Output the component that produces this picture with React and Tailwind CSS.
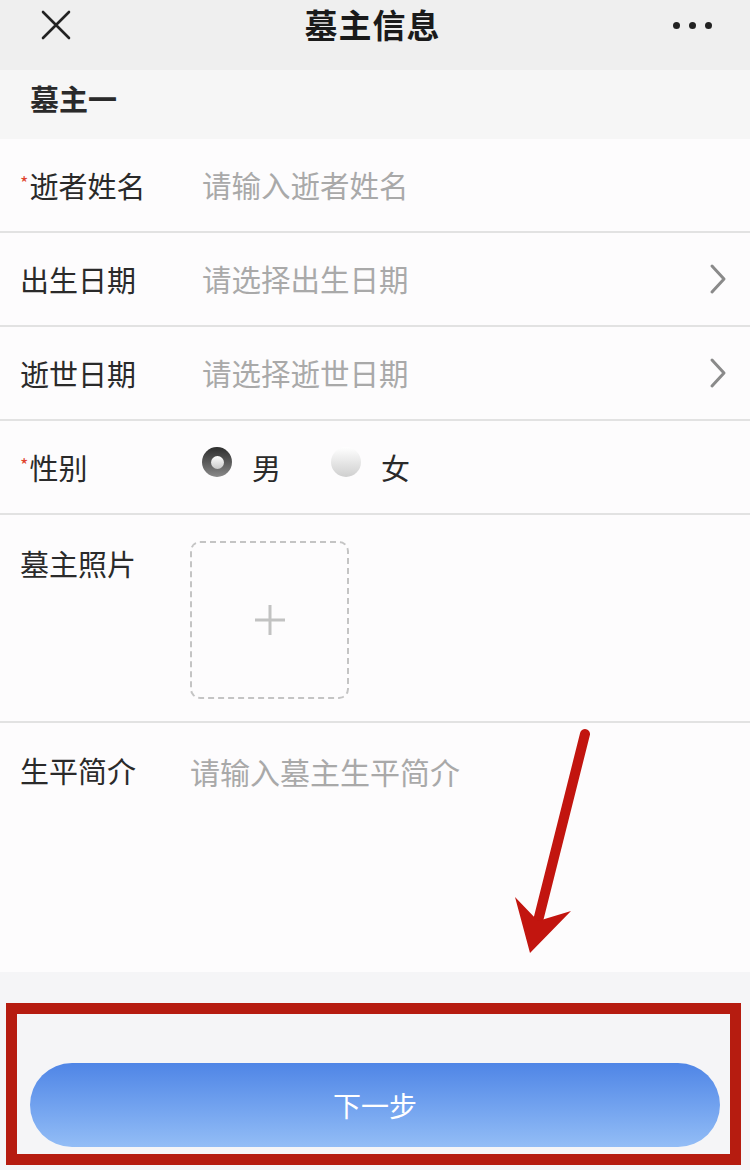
import React from 'react';

const Chevron = () => (
  <svg width="20" height="32" viewBox="0 0 20 32" className="shrink-0">
    <path d="M4 3 L16 16 L4 29" fill="none" stroke="#8a8a8a" strokeWidth="3" strokeLinecap="round" strokeLinejoin="round" />
  </svg>
);

const Label = ({ required, children }) => (
  <div className="w-[182px] shrink-0 flex items-start text-[29px] leading-none text-[#2a2a2a]">
    {required ? <span className="text-[18px] text-[#e0432d] mt-[2px] mr-[1px]">*</span> : null}
    <span>{children}</span>
  </div>
);

const Row = ({ label, required, placeholder, arrow }) => (
  <div className="h-[94px] flex items-center pl-[20px] pr-[22px] border-b-2 border-[#e2e2e2] bg-[#fdfcfd]">
    <Label required={required}>{label}</Label>
    <div className="flex-1 text-[29.5px] leading-none text-[#a9a9a9]">{placeholder}</div>
    {arrow ? <Chevron /> : null}
  </div>
);

const App = () => {
  return (
    <div className="relative w-[750px] h-[1170px] overflow-hidden bg-[#f5f5f7]" style={{ fontFamily: '"Noto Sans CJK SC", "Noto Sans", sans-serif' }}>
      {/* header */}
      <div className="h-[70px] bg-[#efefef] pb-[20px]">
        <div className="h-[50px] flex items-center justify-between px-[40px]">
          <svg width="32" height="30" viewBox="0 0 32 30">
            <path d="M3 2 L29 28 M29 2 L3 28" stroke="#222" strokeWidth="2.6" strokeLinecap="round" />
          </svg>
          <div className="text-[33px] font-semibold text-[#1a1a1a] tracking-[1px]">墓主信息</div>
          <div className="flex gap-[9px] mr-[-2px]">
            <span className="w-[7px] h-[7px] rounded-full bg-[#222]" />
            <span className="w-[7px] h-[7px] rounded-full bg-[#222]" />
            <span className="w-[7px] h-[7px] rounded-full bg-[#222]" />
          </div>
        </div>
      </div>

      {/* section title */}
      <div className="h-[69px] bg-[#f6f6f6] pl-[30px] pt-[13px] text-[29px] font-semibold text-[#2a2a2a] leading-[30px]">墓主一</div>

      <Row required label="逝者姓名" placeholder="请输入逝者姓名" />
      <Row label="出生日期" placeholder="请选择出生日期" arrow />
      <Row label="逝世日期" placeholder="请选择逝世日期" arrow />

      {/* gender */}
      <div className="h-[94px] flex items-center pl-[20px] border-b-2 border-[#e2e2e2] bg-[#fdfcfd]">
        <Label required>性别</Label>
        <div className="flex items-center text-[29px] leading-none text-[#2a2a2a]">
          <span className="w-[30px] h-[30px] rounded-full bg-gradient-to-b from-[#2e2e2e] to-[#8a8a8a] flex items-center justify-center -mt-[10px]">
            <span className="w-[13px] h-[13px] rounded-full bg-gradient-to-b from-[#ffffff] to-[#c9c9c9]" />
          </span>
          <span className="ml-[20px]">男</span>
          <span className="ml-[50px] w-[30px] h-[30px] rounded-full bg-gradient-to-b from-[#ffffff] to-[#cfcfcf] -mt-[10px]" />
          <span className="ml-[20px]">女</span>
        </div>
      </div>

      {/* photo */}
      <div className="h-[208px] flex items-start pl-[20px] pt-[26px] border-b-2 border-[#e2e2e2] bg-[#fdfcfd]">
        <div className="w-[170px] shrink-0 pt-[8px] text-[29px] leading-none text-[#2a2a2a]">墓主照片</div>
        <div className="w-[159px] h-[158px] rounded-[10px] border-2 border-dashed border-[#c4c4c4] flex items-center justify-center">
          <svg width="34" height="34" viewBox="0 0 34 34">
            <path d="M17 2 V32 M2 17 H32" stroke="#c2c2c2" strokeWidth="3" />
          </svg>
        </div>
      </div>

      {/* intro */}
      <div className="h-[249px] flex items-start pl-[20px] pt-[33px] bg-[#fdfcfd]">
        <div className="w-[170px] shrink-0 text-[29px] leading-none text-[#2a2a2a]">生平简介</div>
        <div className="text-[30px] leading-none text-[#a9a9a9]">请输入墓主生平简介</div>
      </div>

      {/* bottom */}
      <div className="relative h-[198px] pt-[91px] px-[30px]">
        <div className="h-[84px] rounded-full bg-gradient-to-b from-[#4f85e6] to-[#93bdf6] flex items-center justify-center text-[28px] text-white">
          下一步
        </div>
        <div className="absolute left-[6px] right-[9px] top-[31px] bottom-[5px] border-[11px] border-[#b61c10]" />
      </div>

      {/* annotation arrow */}
      <svg className="absolute left-[505px] top-[725px]" width="90" height="235" viewBox="0 0 90 235">
        <path d="M80 9 L33 196" stroke="#c2150f" strokeWidth="10" strokeLinecap="round" />
        <path d="M25 228 L10 172 L33 196 L66 186 Z" fill="#c2150f" />
      </svg>
    </div>
  );
};

export default App;
